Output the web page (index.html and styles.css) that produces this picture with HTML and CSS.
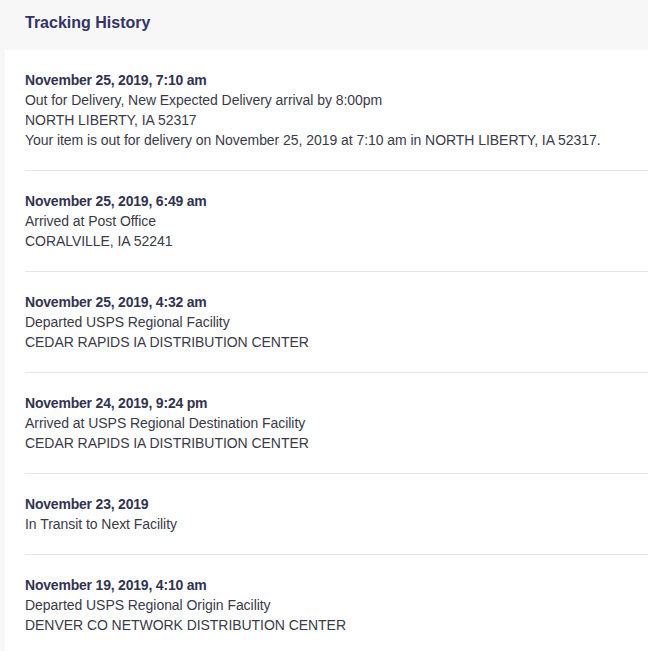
FILE: index.html
```html
<!DOCTYPE html>
<html>
<head>
<meta charset="utf-8">
<link rel="stylesheet" href="styles.css">
</head>
<body>
<div class="header">Tracking History</div>
<div class="panel">
  <div class="item">
    <div class="date">November 25, 2019, 7:10 am</div>
    <div class="line">Out for Delivery, New Expected Delivery arrival by 8:00pm</div>
    <div class="line">NORTH LIBERTY, IA 52317</div>
    <div class="line">Your item is out for delivery on November 25, 2019 at 7:10 am in NORTH LIBERTY, IA 52317.</div>
  </div>
  <div class="item">
    <div class="date">November 25, 2019, 6:49 am</div>
    <div class="line">Arrived at Post Office</div>
    <div class="line">CORALVILLE, IA 52241</div>
  </div>
  <div class="item">
    <div class="date">November 25, 2019, 4:32 am</div>
    <div class="line">Departed USPS Regional Facility</div>
    <div class="line">CEDAR RAPIDS IA DISTRIBUTION CENTER</div>
  </div>
  <div class="item">
    <div class="date">November 24, 2019, 9:24 pm</div>
    <div class="line">Arrived at USPS Regional Destination Facility</div>
    <div class="line">CEDAR RAPIDS IA DISTRIBUTION CENTER</div>
  </div>
  <div class="item">
    <div class="date">November 23, 2019</div>
    <div class="line">In Transit to Next Facility</div>
  </div>
  <div class="item">
    <div class="date">November 19, 2019, 4:10 am</div>
    <div class="line">Departed USPS Regional Origin Facility</div>
    <div class="line">DENVER CO NETWORK DISTRIBUTION CENTER</div>
  </div>
</div>
</body>
</html>
```
FILE: styles.css
```css
html, body {
  margin: 0;
  padding: 0;
  background: #f7f7f7;
  font-family: "Liberation Sans", Arial, sans-serif;
  overflow: hidden;
}
.header {
  padding: 13px 25px 17px;
  font-size: 16px;
  line-height: 20px;
  font-weight: bold;
  color: #333366;
}
.panel {
  margin-left: 5px;
  background: #ffffff;
  padding-left: 20px;
}
.item {
  padding: 20px 0 20px;
  border-bottom: 1px solid #e6e6e6;
}
.date {
  font-size: 14px;
  line-height: 20px;
  font-weight: bold;
  letter-spacing: -0.2px;
  color: #333350;
}
.line {
  font-size: 14px;
  line-height: 20px;
  letter-spacing: -0.05px;
  color: #3a3a48;
}
```
